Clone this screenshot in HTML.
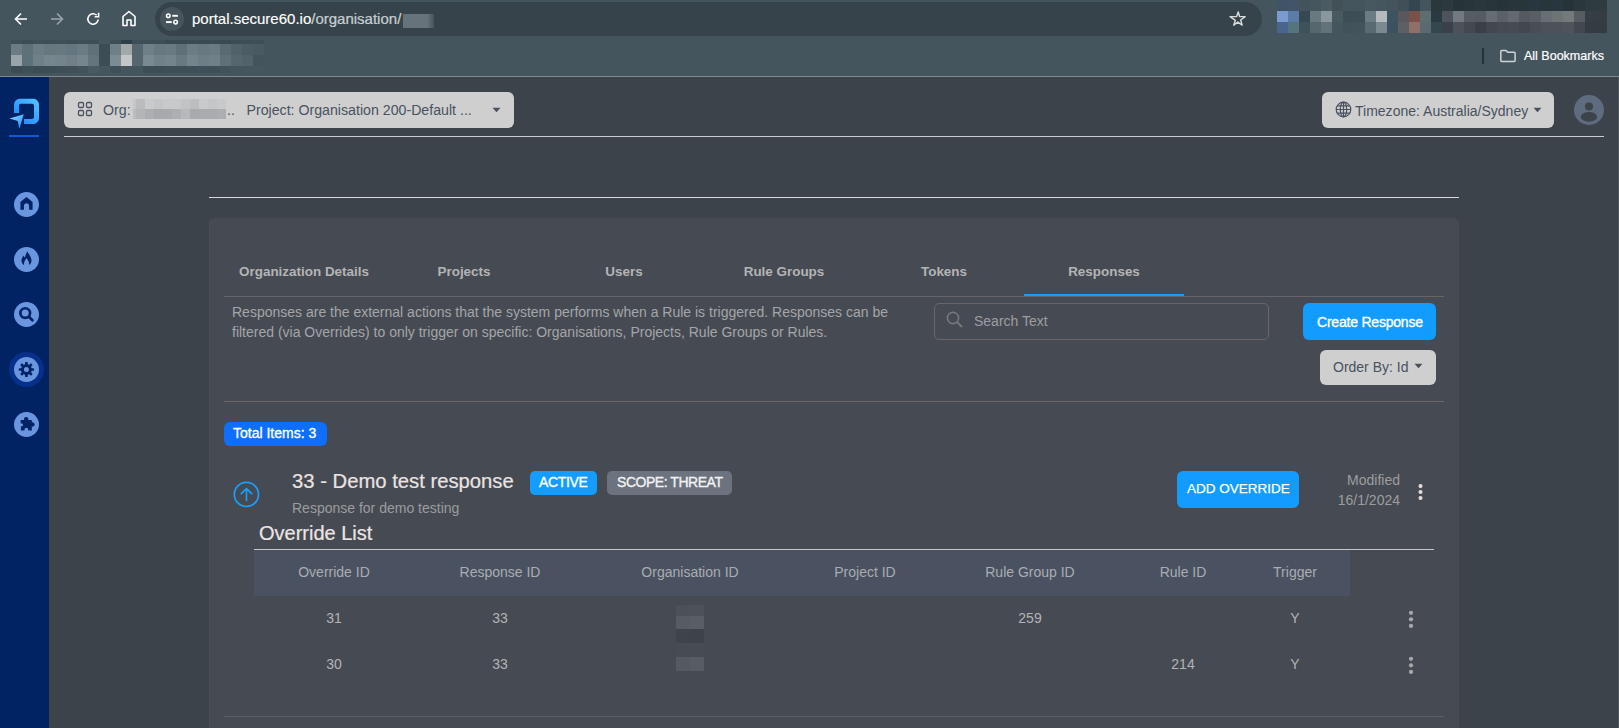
<!DOCTYPE html>
<html><head><meta charset="utf-8">
<style>
*{box-sizing:border-box;margin:0;padding:0}
html,body{width:1619px;height:728px;overflow:hidden;background:#3d434b;font-family:"Liberation Sans",sans-serif}
.abs{position:absolute}
.txt{position:absolute;white-space:nowrap;line-height:1}
#chrome{position:absolute;left:0;top:0;width:1619px;height:77px;background:#45555e;border-bottom:1px solid #7d8a90}
#pill{position:absolute;left:155px;top:2px;width:1107px;height:34px;border-radius:17px;background:#36434a}
#side{position:absolute;left:0;top:77px;width:49px;height:651px;background:#012364}
.hline{position:absolute;height:1px}
.btn-grey{position:absolute;background:#cfcfcf;border-radius:6px}
#card{position:absolute;left:209px;top:218px;width:1250px;height:540px;background:#464b53;border-radius:5px;border-left:1px solid #4b4d56}
.tab{position:absolute;top:264.6px;width:160px;text-align:center;font-weight:bold;font-size:13.45px;line-height:1;color:#b4b4b6}
.sico{position:absolute;left:14px;width:25px;height:25px;border-radius:50%;background:#6a96e0}
.sico svg{position:absolute;left:0;top:0}
.th{position:absolute;top:565px;font-size:14px;color:#a9acb2;text-align:center;line-height:1;white-space:nowrap}
.td{position:absolute;font-size:14px;color:#b3b3b5;text-align:center;line-height:1;white-space:nowrap}
.mos{position:absolute}
.mos i{position:absolute;display:block}
</style></head><body>
<div id="chrome">
  <div id="pill"></div>
  <!-- back -->
  <svg class="abs" style="left:13px;top:11px" width="16" height="16" viewBox="0 0 16 16"><path d="M14 8H2.5M8 2.5L2.5 8L8 13.5" stroke="#fff" stroke-width="1.6" fill="none"/></svg>
  <svg class="abs" style="left:49px;top:11px" width="16" height="16" viewBox="0 0 16 16"><path d="M2 8h11.5M8 2.5L13.5 8L8 13.5" stroke="#9aa5aa" stroke-width="1.6" fill="none"/></svg>
  <svg class="abs" style="left:85px;top:11px" width="16" height="16" viewBox="0 0 16 16"><path d="M13.2 8.5A5.2 5.2 0 1 1 11.6 4.2" stroke="#fff" stroke-width="1.6" fill="none"/><path d="M13.6 1.8V5.8H9.6" stroke="#fff" stroke-width="1.6" fill="none"/></svg>
  <svg class="abs" style="left:121px;top:10px" width="16" height="17" viewBox="0 0 16 17"><path d="M2 15.5V6.5L8 1.5L14 6.5V15.5H10V10H6V15.5Z" stroke="#fff" stroke-width="1.6" fill="none" stroke-linejoin="round"/></svg>
  <div class="abs" style="left:160px;top:7px;width:24px;height:24px;border-radius:50%;background:#46545c"></div>
  <svg class="abs" style="left:164px;top:11px" width="16" height="16" viewBox="0 0 16 16"><circle cx="4.3" cy="4.8" r="1.8" stroke="#fff" stroke-width="1.5" fill="none"/><path d="M8.3 4.8H13.9" stroke="#fff" stroke-width="1.9"/><circle cx="11.6" cy="11.1" r="1.8" stroke="#fff" stroke-width="1.5" fill="none"/><path d="M2 11.1H7.8" stroke="#fff" stroke-width="1.9"/></svg>
  <div class="txt" style="left:192px;top:11px;font-size:15px;color:#fff;-webkit-text-stroke:0.15px #fff">portal.secure60.io<span style="color:#bfc6ca">/organisation/</span></div>
  <div class="abs" style="left:403px;top:14px;width:31px;height:14px;background:linear-gradient(90deg,#67737a 0,#67737a 78%,#46545b 100%)"></div>
  <svg class="abs" style="left:1228px;top:9px" width="20" height="20" viewBox="0 0 20 20"><path d="M10.30 2.15L11.85 7.30L18.00 7.30L12.98 11.06L14.70 16.80L9.86 13.39L5.30 16.80L7.12 11.47L1.20 7.30L8.54 7.30Z" stroke="#d9dadb" stroke-width="1.6" fill="none" stroke-linejoin="round" transform="translate(9.6 10.3) scale(0.9) translate(-9.6 -10.3)"/></svg>
  <!-- extensions mosaic -->
  <div class="mos" style="left:1277px;top:0;width:330px;height:38px"><i style="left:0px;top:0px;width:11px;height:11px;background:#405468"></i><i style="left:11px;top:0px;width:11px;height:11px;background:#415468"></i><i style="left:22px;top:0px;width:11px;height:11px;background:#44545a"></i><i style="left:33px;top:0px;width:11px;height:11px;background:#45565e"></i><i style="left:44px;top:0px;width:11px;height:11px;background:#4a5c62"></i><i style="left:55px;top:0px;width:11px;height:11px;background:#425058"></i><i style="left:66px;top:0px;width:11px;height:11px;background:#45555d"></i><i style="left:77px;top:0px;width:11px;height:11px;background:#45555d"></i><i style="left:88px;top:0px;width:11px;height:11px;background:#485860"></i><i style="left:99px;top:0px;width:11px;height:11px;background:#46565e"></i><i style="left:110px;top:0px;width:11px;height:11px;background:#44545c"></i><i style="left:121px;top:0px;width:11px;height:11px;background:#415058"></i><i style="left:132px;top:0px;width:11px;height:11px;background:#364650"></i><i style="left:143px;top:0px;width:11px;height:11px;background:#45555d"></i><i style="left:154px;top:0px;width:11px;height:11px;background:#2a383e"></i><i style="left:165px;top:0px;width:11px;height:11px;background:#2c3a40"></i><i style="left:176px;top:0px;width:11px;height:11px;background:#26343a"></i><i style="left:187px;top:0px;width:11px;height:11px;background:#28363c"></i><i style="left:198px;top:0px;width:11px;height:11px;background:#2a383e"></i><i style="left:209px;top:0px;width:11px;height:11px;background:#28363c"></i><i style="left:220px;top:0px;width:11px;height:11px;background:#26343a"></i><i style="left:231px;top:0px;width:11px;height:11px;background:#28363c"></i><i style="left:242px;top:0px;width:11px;height:11px;background:#28363c"></i><i style="left:253px;top:0px;width:11px;height:11px;background:#283640"></i><i style="left:264px;top:0px;width:11px;height:11px;background:#28363c"></i><i style="left:275px;top:0px;width:11px;height:11px;background:#283640"></i><i style="left:286px;top:0px;width:11px;height:11px;background:#26343a"></i><i style="left:297px;top:0px;width:11px;height:11px;background:#2a383e"></i><i style="left:308px;top:0px;width:11px;height:11px;background:#2e3c42"></i><i style="left:319px;top:0px;width:11px;height:11px;background:#2e3c42"></i><i style="left:0px;top:11px;width:11px;height:11px;background:#7b9ad0"></i><i style="left:11px;top:11px;width:11px;height:11px;background:#5a7ca8"></i><i style="left:22px;top:11px;width:11px;height:11px;background:#364850"></i><i style="left:33px;top:11px;width:11px;height:11px;background:#687a80"></i><i style="left:44px;top:11px;width:11px;height:11px;background:#8a989e"></i><i style="left:55px;top:11px;width:11px;height:11px;background:#485a60"></i><i style="left:66px;top:11px;width:11px;height:11px;background:#3d4d55"></i><i style="left:77px;top:11px;width:11px;height:11px;background:#3e4e56"></i><i style="left:88px;top:11px;width:11px;height:11px;background:#6c7c84"></i><i style="left:99px;top:11px;width:11px;height:11px;background:#b4babd"></i><i style="left:110px;top:11px;width:11px;height:11px;background:#3c5460"></i><i style="left:121px;top:11px;width:11px;height:11px;background:#5a585c"></i><i style="left:132px;top:11px;width:11px;height:11px;background:#7a5048"></i><i style="left:143px;top:11px;width:11px;height:11px;background:#5e6e70"></i><i style="left:154px;top:11px;width:11px;height:11px;background:#2a3a42"></i><i style="left:165px;top:11px;width:11px;height:11px;background:#4e545a"></i><i style="left:176px;top:11px;width:11px;height:11px;background:#727a80"></i><i style="left:187px;top:11px;width:11px;height:11px;background:#555c62"></i><i style="left:198px;top:11px;width:11px;height:11px;background:#545b62"></i><i style="left:209px;top:11px;width:11px;height:11px;background:#656c72"></i><i style="left:220px;top:11px;width:11px;height:11px;background:#5a6268"></i><i style="left:231px;top:11px;width:11px;height:11px;background:#626a70"></i><i style="left:242px;top:11px;width:11px;height:11px;background:#545a60"></i><i style="left:253px;top:11px;width:11px;height:11px;background:#585e64"></i><i style="left:264px;top:11px;width:11px;height:11px;background:#676e74"></i><i style="left:275px;top:11px;width:11px;height:11px;background:#6c7476"></i><i style="left:286px;top:11px;width:11px;height:11px;background:#727a7c"></i><i style="left:297px;top:11px;width:11px;height:11px;background:#565c62"></i><i style="left:308px;top:11px;width:11px;height:11px;background:#363e44"></i><i style="left:319px;top:11px;width:11px;height:11px;background:#363c44"></i><i style="left:0px;top:22px;width:11px;height:11px;background:#4a6490"></i><i style="left:11px;top:22px;width:11px;height:11px;background:#557480"></i><i style="left:22px;top:22px;width:11px;height:11px;background:#3e525c"></i><i style="left:33px;top:22px;width:11px;height:11px;background:#56686e"></i><i style="left:44px;top:22px;width:11px;height:11px;background:#627278"></i><i style="left:55px;top:22px;width:11px;height:11px;background:#46565e"></i><i style="left:66px;top:22px;width:11px;height:11px;background:#42525a"></i><i style="left:77px;top:22px;width:11px;height:11px;background:#43535b"></i><i style="left:88px;top:22px;width:11px;height:11px;background:#5a6a72"></i><i style="left:99px;top:22px;width:11px;height:11px;background:#7a8a90"></i><i style="left:110px;top:22px;width:11px;height:11px;background:#3c5260"></i><i style="left:121px;top:22px;width:11px;height:11px;background:#5e5f62"></i><i style="left:132px;top:22px;width:11px;height:11px;background:#8e7068"></i><i style="left:143px;top:22px;width:11px;height:11px;background:#5a6a70"></i><i style="left:154px;top:22px;width:11px;height:11px;background:#34464e"></i><i style="left:165px;top:22px;width:11px;height:11px;background:#3a4248"></i><i style="left:176px;top:22px;width:11px;height:11px;background:#4c5258"></i><i style="left:187px;top:22px;width:11px;height:11px;background:#424a50"></i><i style="left:198px;top:22px;width:11px;height:11px;background:#3a4046"></i><i style="left:209px;top:22px;width:11px;height:11px;background:#42484e"></i><i style="left:220px;top:22px;width:11px;height:11px;background:#444c52"></i><i style="left:231px;top:22px;width:11px;height:11px;background:#464c52"></i><i style="left:242px;top:22px;width:11px;height:11px;background:#42484e"></i><i style="left:253px;top:22px;width:11px;height:11px;background:#484e54"></i><i style="left:264px;top:22px;width:11px;height:11px;background:#4c525a"></i><i style="left:275px;top:22px;width:11px;height:11px;background:#4c525a"></i><i style="left:286px;top:22px;width:11px;height:11px;background:#4e545a"></i><i style="left:297px;top:22px;width:11px;height:11px;background:#42484e"></i><i style="left:308px;top:22px;width:11px;height:11px;background:#343c42"></i><i style="left:319px;top:22px;width:11px;height:11px;background:#343c42"></i></div>
  <!-- bookmarks mosaic -->
  <div class="mos" style="left:11px;top:40px;width:270px;height:33px"><i style="left:0px;top:0px;width:11px;height:4px;background:#3f4f57"></i><i style="left:11px;top:0px;width:11px;height:4px;background:#3d4d55"></i><i style="left:22px;top:0px;width:11px;height:4px;background:#3f4f57"></i><i style="left:33px;top:0px;width:11px;height:4px;background:#3e4e56"></i><i style="left:44px;top:0px;width:11px;height:4px;background:#3f4f57"></i><i style="left:55px;top:0px;width:11px;height:4px;background:#3e4e56"></i><i style="left:66px;top:0px;width:11px;height:4px;background:#3f4f57"></i><i style="left:77px;top:0px;width:11px;height:4px;background:#3e4e56"></i><i style="left:88px;top:0px;width:11px;height:4px;background:#46565e"></i><i style="left:99px;top:0px;width:11px;height:4px;background:#3e4e56"></i><i style="left:110px;top:0px;width:11px;height:4px;background:#2f3f48"></i><i style="left:121px;top:0px;width:11px;height:4px;background:#3e4e56"></i><i style="left:132px;top:0px;width:11px;height:4px;background:#3e4e56"></i><i style="left:143px;top:0px;width:11px;height:4px;background:#3e4e56"></i><i style="left:154px;top:0px;width:11px;height:4px;background:#3a4a52"></i><i style="left:165px;top:0px;width:11px;height:4px;background:#3a4a52"></i><i style="left:176px;top:0px;width:11px;height:4px;background:#3b4b53"></i><i style="left:187px;top:0px;width:11px;height:4px;background:#3a4a52"></i><i style="left:198px;top:0px;width:11px;height:4px;background:#3b4b53"></i><i style="left:209px;top:0px;width:11px;height:4px;background:#3a4a52"></i><i style="left:220px;top:0px;width:11px;height:4px;background:#3d4d55"></i><i style="left:231px;top:0px;width:11px;height:4px;background:#3e4e56"></i><i style="left:242px;top:0px;width:11px;height:4px;background:#3f4f57"></i><i style="left:0px;top:4px;width:11px;height:11px;background:#6b7c84"></i><i style="left:11px;top:4px;width:11px;height:11px;background:#5e7078"></i><i style="left:22px;top:4px;width:11px;height:11px;background:#6b7c84"></i><i style="left:33px;top:4px;width:11px;height:11px;background:#66777e"></i><i style="left:44px;top:4px;width:11px;height:11px;background:#68797f"></i><i style="left:55px;top:4px;width:11px;height:11px;background:#647680"></i><i style="left:66px;top:4px;width:11px;height:11px;background:#6b7c84"></i><i style="left:77px;top:4px;width:11px;height:11px;background:#5f7078"></i><i style="left:88px;top:4px;width:11px;height:11px;background:#3d4d55"></i><i style="left:99px;top:4px;width:11px;height:11px;background:#6f8088"></i><i style="left:110px;top:4px;width:11px;height:11px;background:#a3a8a8"></i><i style="left:121px;top:4px;width:11px;height:11px;background:#55666e"></i><i style="left:132px;top:4px;width:11px;height:11px;background:#6f8088"></i><i style="left:143px;top:4px;width:11px;height:11px;background:#67787f"></i><i style="left:154px;top:4px;width:11px;height:11px;background:#6a7a82"></i><i style="left:165px;top:4px;width:11px;height:11px;background:#5f7078"></i><i style="left:176px;top:4px;width:11px;height:11px;background:#6b7c84"></i><i style="left:187px;top:4px;width:11px;height:11px;background:#67787f"></i><i style="left:198px;top:4px;width:11px;height:11px;background:#6a7b82"></i><i style="left:209px;top:4px;width:11px;height:11px;background:#5a6a72"></i><i style="left:220px;top:4px;width:11px;height:11px;background:#52626a"></i><i style="left:231px;top:4px;width:11px;height:11px;background:#4c5c64"></i><i style="left:242px;top:4px;width:11px;height:11px;background:#4a5a62"></i><i style="left:0px;top:15px;width:11px;height:11px;background:#98a4aa"></i><i style="left:11px;top:15px;width:11px;height:11px;background:#5e7078"></i><i style="left:22px;top:15px;width:11px;height:11px;background:#6f8088"></i><i style="left:33px;top:15px;width:11px;height:11px;background:#76868e"></i><i style="left:44px;top:15px;width:11px;height:11px;background:#74848c"></i><i style="left:55px;top:15px;width:11px;height:11px;background:#707f88"></i><i style="left:66px;top:15px;width:11px;height:11px;background:#76868e"></i><i style="left:77px;top:15px;width:11px;height:11px;background:#64757e"></i><i style="left:88px;top:15px;width:11px;height:11px;background:#3d4d55"></i><i style="left:99px;top:15px;width:11px;height:11px;background:#7b8c94"></i><i style="left:110px;top:15px;width:11px;height:11px;background:#c4c7c8"></i><i style="left:121px;top:15px;width:11px;height:11px;background:#55666e"></i><i style="left:132px;top:15px;width:11px;height:11px;background:#7a8a92"></i><i style="left:143px;top:15px;width:11px;height:11px;background:#718188"></i><i style="left:154px;top:15px;width:11px;height:11px;background:#74848c"></i><i style="left:165px;top:15px;width:11px;height:11px;background:#687980"></i><i style="left:176px;top:15px;width:11px;height:11px;background:#74848c"></i><i style="left:187px;top:15px;width:11px;height:11px;background:#6d7e86"></i><i style="left:198px;top:15px;width:11px;height:11px;background:#6f8088"></i><i style="left:209px;top:15px;width:11px;height:11px;background:#5f7078"></i><i style="left:220px;top:15px;width:11px;height:11px;background:#56666e"></i><i style="left:231px;top:15px;width:11px;height:11px;background:#52626a"></i><i style="left:242px;top:15px;width:11px;height:11px;background:#44545c"></i><i style="left:0px;top:26px;width:11px;height:7px;background:#3c4c54"></i><i style="left:11px;top:26px;width:11px;height:7px;background:#3d4f58"></i><i style="left:22px;top:26px;width:11px;height:7px;background:#3c4c55"></i><i style="left:33px;top:26px;width:11px;height:7px;background:#3d4d55"></i><i style="left:44px;top:26px;width:11px;height:7px;background:#3f4f57"></i><i style="left:55px;top:26px;width:11px;height:7px;background:#414f57"></i><i style="left:66px;top:26px;width:11px;height:7px;background:#43535b"></i><i style="left:77px;top:26px;width:11px;height:7px;background:#4a5a62"></i><i style="left:88px;top:26px;width:11px;height:7px;background:#46565e"></i><i style="left:99px;top:26px;width:11px;height:7px;background:#40505a"></i><i style="left:110px;top:26px;width:11px;height:7px;background:#45555d"></i><i style="left:121px;top:26px;width:11px;height:7px;background:#45555d"></i><i style="left:132px;top:26px;width:11px;height:7px;background:#3e4e56"></i><i style="left:143px;top:26px;width:11px;height:7px;background:#3e4e56"></i><i style="left:154px;top:26px;width:11px;height:7px;background:#3f4f57"></i><i style="left:165px;top:26px;width:11px;height:7px;background:#404f57"></i><i style="left:176px;top:26px;width:11px;height:7px;background:#3f4f57"></i><i style="left:187px;top:26px;width:11px;height:7px;background:#40505a"></i><i style="left:198px;top:26px;width:11px;height:7px;background:#3f4f57"></i><i style="left:209px;top:26px;width:11px;height:7px;background:#43535b"></i><i style="left:220px;top:26px;width:11px;height:7px;background:#45555d"></i><i style="left:231px;top:26px;width:11px;height:7px;background:#46565e"></i><i style="left:242px;top:26px;width:11px;height:7px;background:#47575f"></i></div>
  <div class="abs" style="left:1482px;top:48px;width:2px;height:16px;background:#263238"></div>
  <svg class="abs" style="left:1499px;top:48px" width="18" height="16" viewBox="0 0 18 16"><path d="M1.8 3.4C1.8 2.9 2.2 2.5 2.7 2.5H7L8.7 4.3H15.2C15.7 4.3 16.1 4.7 16.1 5.2V12.6C16.1 13.1 15.7 13.5 15.2 13.5H2.7C2.2 13.5 1.8 13.1 1.8 12.6Z" stroke="#d0d4d6" stroke-width="1.5" fill="none" stroke-linejoin="round"/></svg>
  <div class="txt" style="left:1524px;top:49.5px;font-size:12.5px;color:#fff;-webkit-text-stroke:0.2px #fff">All Bookmarks</div>
</div>

<div id="side">
  <svg class="abs" style="left:8px;top:20px" width="34" height="34" viewBox="0 0 34 34">
    <defs><linearGradient id="lg" x1="0" y1="1" x2="1" y2="0"><stop offset="0" stop-color="#1a7dff"/><stop offset="1" stop-color="#55c8ff"/></linearGradient>
    <linearGradient id="lg2" x1="0" y1="0" x2="1" y2="1"><stop offset="0" stop-color="#8ee0ff"/><stop offset="1" stop-color="#1a8cff"/></linearGradient></defs>
    <path d="M12 1.8H25C28.3 1.8 31 4.5 31 7.8V21C31 24.3 28.3 27 25 27H16V22H24C25.1 22 26 21.1 26 20V8.8C26 7.7 25.1 6.8 24 6.8H13C11.9 6.8 11 7.7 11 8.8V16H6V7.8C6 4.5 8.7 1.8 12 1.8Z" fill="url(#lg)"/>
    <path d="M1.5 21.4L15.7 17.3L11.4 31.8L9.8 24.1Z" fill="url(#lg2)"/>
  </svg>
  <div class="abs" style="left:9px;top:58px;width:30px;height:2px;background:#0f5ad0"></div>
  <div class="sico" style="top:115px"><svg width="25" height="25" viewBox="0 0 25 25"><path d="M12.5 5L18.6 10.1V17.8H15.1V13.7C15.1 12.3 13.9 11.2 12.5 11.2S9.95 12.3 9.95 13.7V17.8H6.4V10.1Z" fill="#022466"/></svg></div>
  <div class="sico" style="top:170px"><svg width="25" height="25" viewBox="0 0 25 25"><path d="M13.4 4.2C14.3 7 17.6 9.6 17.5 13.7C17.4 15.8 16.2 17.3 14.9 18.1C15.3 16.3 14.9 14.6 13.8 13.1C13.2 12.3 12.7 11.7 12.4 11.1C11.9 12.5 10.7 13.6 10.3 15C10 16.1 10 17.2 10.1 18.2C8.5 17.2 7.4 15.4 7.5 13.2C7.6 11.2 8.8 9.9 9.6 8.6C9.9 9.6 10.3 10.3 10.9 10.6C11.4 8.3 12.2 6 13.4 4.2Z" fill="#022466"/></svg></div>
  <div class="sico" style="top:225px"><svg width="25" height="25" viewBox="0 0 25 25"><circle cx="11.2" cy="11.1" r="4.85" stroke="#022466" stroke-width="2.7" fill="none"/><path d="M15.2 15.1L18.4 18.2" stroke="#022466" stroke-width="2.8" stroke-linecap="round"/></svg></div>
  <div class="abs" style="left:9.2px;top:275.2px;width:34.6px;height:34.6px;border-radius:50%;background:#06308a"></div><div class="sico" style="top:280px"><svg width="25" height="25" viewBox="0 0 25 25"><g fill="#022466"><rect x="11.05" y="4.9" width="2.7" height="3.4" rx="0.6" transform="rotate(0 12.4 12.5)"/><rect x="11.05" y="4.9" width="2.7" height="3.4" rx="0.6" transform="rotate(45 12.4 12.5)"/><rect x="11.05" y="4.9" width="2.7" height="3.4" rx="0.6" transform="rotate(90 12.4 12.5)"/><rect x="11.05" y="4.9" width="2.7" height="3.4" rx="0.6" transform="rotate(135 12.4 12.5)"/><rect x="11.05" y="4.9" width="2.7" height="3.4" rx="0.6" transform="rotate(180 12.4 12.5)"/><rect x="11.05" y="4.9" width="2.7" height="3.4" rx="0.6" transform="rotate(225 12.4 12.5)"/><rect x="11.05" y="4.9" width="2.7" height="3.4" rx="0.6" transform="rotate(270 12.4 12.5)"/><rect x="11.05" y="4.9" width="2.7" height="3.4" rx="0.6" transform="rotate(315 12.4 12.5)"/></g><circle cx="12.4" cy="12.5" r="3.95" stroke="#022466" stroke-width="2.9" fill="none"/></svg></div>
  <div class="sico" style="top:335px"><svg width="25" height="25" viewBox="0 0 25 25"><path d="M6.7 7.9H10.3C10 7.5 9.9 7.1 10 6.7C10.2 5.7 11.1 5 12.2 5C13.3 5 14.2 5.7 14.4 6.7C14.5 7.1 14.4 7.5 14.1 7.9H17.8V10.6C18.2 10.3 18.6 10.3 19 10.4C20 10.6 20.7 11.5 20.7 12.5C20.7 13.5 20 14.4 19 14.6C18.6 14.7 18.2 14.7 17.8 14.4V18.6H14.1C14.3 18.3 14.4 17.9 14.3 17.5C14.1 16.5 13.3 15.7 12.4 15.7C11.5 15.7 10.7 16.5 10.5 17.5C10.4 17.9 10.5 18.3 10.7 18.6H6.9V14.2C7.3 14.4 7.7 14.4 8.1 14.3C8.7 14 9 13.5 9 12.9C9 12.3 8.7 11.8 8.1 11.5C7.7 11.4 7.3 11.4 6.7 11.6Z" fill="#022466"/></svg></div>
</div>

<!-- header -->
<div class="btn-grey" style="left:64px;top:92px;width:450px;height:36px"></div>
<svg class="abs" style="left:77px;top:101px" width="16" height="16" viewBox="0 0 16 16"><g stroke="#4a5260" stroke-width="1.3" fill="none"><rect x="1.5" y="1.5" width="5" height="5" rx="1.2"/><rect x="9.5" y="1.5" width="5" height="5" rx="1.2"/><rect x="1.5" y="9.5" width="5" height="5" rx="1.2"/><rect x="9.5" y="9.5" width="5" height="5" rx="1.2"/></g></svg>
<div class="txt" style="left:103px;top:103.2px;font-size:14.2px;color:#4a5260">Org:</div>
<div class="mos" style="left:133px;top:99px;width:94px;height:20px"><i style="left:0px;top:0px;width:3px;height:10px;background:#c6c7c9"></i><i style="left:3px;top:0px;width:9px;height:10px;background:#bbbcbf"></i><i style="left:12px;top:0px;width:9px;height:10px;background:#c9cacc"></i><i style="left:21px;top:0px;width:9px;height:10px;background:#c4c5c8"></i><i style="left:30px;top:0px;width:9px;height:10px;background:#c8c9cb"></i><i style="left:39px;top:0px;width:9px;height:10px;background:#c8c9cb"></i><i style="left:48px;top:0px;width:9px;height:10px;background:#c2c3c5"></i><i style="left:57px;top:0px;width:9px;height:10px;background:#bdbec0"></i><i style="left:66px;top:0px;width:9px;height:10px;background:#c9cacc"></i><i style="left:75px;top:0px;width:9px;height:10px;background:#c5c6c8"></i><i style="left:84px;top:0px;width:9px;height:10px;background:#c8c9cb"></i><i style="left:0px;top:10px;width:3px;height:10px;background:#bbbcbe"></i><i style="left:3px;top:10px;width:9px;height:10px;background:#b4b5b8"></i><i style="left:12px;top:10px;width:9px;height:10px;background:#adaeb1"></i><i style="left:21px;top:10px;width:9px;height:10px;background:#a8a9ac"></i><i style="left:30px;top:10px;width:9px;height:10px;background:#a9aaad"></i><i style="left:39px;top:10px;width:9px;height:10px;background:#aeafb2"></i><i style="left:48px;top:10px;width:9px;height:10px;background:#b7b8bb"></i><i style="left:57px;top:10px;width:9px;height:10px;background:#a9aaad"></i><i style="left:66px;top:10px;width:9px;height:10px;background:#a9acaf"></i><i style="left:75px;top:10px;width:9px;height:10px;background:#aaabae"></i><i style="left:84px;top:10px;width:9px;height:10px;background:#adaeb1"></i></div>
<div class="txt" style="left:227px;top:103.2px;font-size:14.2px;color:#4a5260">..</div>
<div class="txt" style="left:246.5px;top:103.2px;font-size:14.18px;color:#4a5260">Project: Organisation 200-Default ...</div>
<svg class="abs" style="left:492px;top:107px" width="9" height="6" viewBox="0 0 9 6"><path d="M0.5 0.8H8.5L4.5 5.2Z" fill="#4a5260"/></svg>
<div class="hline" style="left:64px;top:136px;width:1540px;background:#c9ccd0"></div>
<div class="btn-grey" style="left:1322px;top:92px;width:232px;height:36px"></div>
<svg class="abs" style="left:1335px;top:101px" width="17" height="17" viewBox="0 0 17 17"><g stroke="#4a5260" stroke-width="1.2" fill="none"><circle cx="8.5" cy="8.5" r="7.3"/><ellipse cx="8.5" cy="8.5" rx="3.2" ry="7.3"/><path d="M1.2 8.5H15.8M2.3 4.8H14.7M2.3 12.2H14.7M8.5 1.2V15.8"/></g></svg>
<div class="txt" style="left:1355px;top:103.6px;font-size:14.03px;color:#4a5260">Timezone: Australia/Sydney</div>
<svg class="abs" style="left:1533px;top:107px" width="9" height="6" viewBox="0 0 9 6"><path d="M0.5 0.8H8.5L4.5 5.2Z" fill="#4a5260"/></svg>
<svg class="abs" style="left:1574px;top:95px" width="30" height="30" viewBox="0 0 30 30"><circle cx="15" cy="15" r="15" fill="#5f6b7f"/><circle cx="15" cy="11.4" r="4" fill="#3d434b"/><ellipse cx="15" cy="21.9" rx="8.2" ry="4.9" fill="#3d434b"/></svg>

<div class="hline" style="left:209px;top:197px;width:1250px;background:#d5d9dd"></div>
<div id="card"></div>

<div class="tab" style="left:224px">Organization Details</div>
<div class="tab" style="left:384px">Projects</div>
<div class="tab" style="left:544px">Users</div>
<div class="tab" style="left:704px">Rule Groups</div>
<div class="tab" style="left:864px">Tokens</div>
<div class="tab" style="left:1024px">Responses</div>
<div class="hline" style="left:224px;top:296px;width:1220px;background:#63656a"></div>
<div class="abs" style="left:1024px;top:294px;width:160px;height:2px;background:#1a9cf5"></div>

<div class="txt" style="left:232px;top:302px;font-size:14px;line-height:20px;color:#a4a5a8;white-space:normal;width:680px">Responses are the external actions that the system performs when a Rule is triggered. Responses can be<br>filtered (via Overrides) to only trigger on specific: Organisations, Projects, Rule Groups or Rules.</div>

<div class="abs" style="left:934px;top:303px;width:335px;height:37px;border:1px solid #6a6668;border-radius:5px"></div>
<svg class="abs" style="left:945px;top:310px" width="20" height="20" viewBox="0 0 20 20"><circle cx="8" cy="8" r="5.6" stroke="#77777a" stroke-width="1.6" fill="none"/><path d="M12.2 12.2L17 17" stroke="#77777a" stroke-width="1.8"/></svg>
<div class="txt" style="left:974px;top:314px;font-size:14px;color:#9d9da0">Search Text</div>

<div class="abs" style="left:1303px;top:303px;width:133px;height:37px;border-radius:6px;background:#129cff"></div>
<div class="txt" style="left:1317px;top:314.5px;font-size:14px;letter-spacing:-0.21px;color:#fff;-webkit-text-stroke:0.35px #fff">Create Response</div>
<div class="btn-grey" style="left:1320px;top:350px;width:116px;height:35px"></div>
<div class="txt" style="left:1333px;top:360px;font-size:14px;color:#4a5260">Order By: Id</div>
<svg class="abs" style="left:1414px;top:363px" width="9" height="6" viewBox="0 0 9 6"><path d="M0.5 0.8H8.5L4.5 5.2Z" fill="#4a5260"/></svg>

<div class="hline" style="left:224px;top:401px;width:1220px;background:#6a6769"></div>

<div class="abs" style="left:224px;top:422px;width:103px;height:24px;border-radius:6px;background:#0e6efd"></div>
<div class="txt" style="left:233px;top:426.3px;font-size:14px;color:#fff;-webkit-text-stroke:0.35px #fff">Total Items: 3</div>

<svg class="abs" style="left:233px;top:481px" width="27" height="27" viewBox="0 0 27 27"><circle cx="13.4" cy="13.4" r="12.1" stroke="#18a0ff" stroke-width="1.7" fill="none"/><path d="M13.5 19.6V8M8.3 12.6L13.5 7.6L18.7 12.6" stroke="#18a0ff" stroke-width="1.6" fill="none" stroke-linecap="round" stroke-linejoin="round"/></svg>
<div class="txt" style="left:292px;top:470.5px;font-size:20.25px;color:#ebe3e1;-webkit-text-stroke:0.2px #ebe3e1">33 - Demo test response</div>
<div class="abs" style="left:530px;top:471px;width:67px;height:24px;border-radius:5px;background:#149dff"></div>
<div class="txt" style="left:539px;top:475.2px;font-size:14px;letter-spacing:-0.35px;color:#fff;-webkit-text-stroke:0.35px #fff">ACTIVE</div>
<div class="abs" style="left:607px;top:471px;width:125px;height:24px;border-radius:5px;background:#6c737e"></div>
<div class="txt" style="left:617px;top:475.2px;font-size:14px;letter-spacing:-0.46px;color:#f2f2f2;-webkit-text-stroke:0.35px #f2f2f2">SCOPE: THREAT</div>
<div class="txt" style="left:292px;top:501.3px;font-size:14px;color:#9c9c9e">Response for demo testing</div>

<div class="abs" style="left:1177px;top:471px;width:122px;height:37px;border-radius:6px;background:#129cff"></div>
<div class="txt" style="left:1187px;top:482px;font-size:13.5px;color:#fff;-webkit-text-stroke:0.25px #fff">ADD OVERRIDE</div>
<div class="txt" style="left:1300px;top:473.2px;width:100px;text-align:right;font-size:14px;color:#9d9d9f">Modified</div>
<div class="txt" style="left:1300px;top:493.2px;width:100px;text-align:right;font-size:14px;color:#9d9d9f">16/1/2024</div>
<svg class="abs" style="left:1416.4px;top:482px" width="9" height="20" viewBox="0 0 9 20"><g fill="#e4dcdb"><circle cx="4.5" cy="4.1" r="2.05"/><circle cx="4.5" cy="10" r="2.05"/><circle cx="4.5" cy="16" r="2.05"/></g></svg>

<div class="txt" style="left:259px;top:523.4px;font-size:20px;color:#ede5e3;-webkit-text-stroke:0.2px #ede5e3">Override List</div>
<div class="hline" style="left:254px;top:549px;width:1180px;background:#c5c6c8"></div>
<div class="abs" style="left:254px;top:550px;width:1096px;height:46px;background:#4a5261"></div>
<div class="th" style="left:254px;width:160px">Override ID</div>
<div class="th" style="left:414px;width:172px">Response ID</div>
<div class="th" style="left:586px;width:208px">Organisation ID</div>
<div class="th" style="left:794px;width:142px">Project ID</div>
<div class="th" style="left:936px;width:188px">Rule Group ID</div>
<div class="th" style="left:1124px;width:118px">Rule ID</div>
<div class="th" style="left:1242px;width:106px">Trigger</div>

<div class="td" style="left:254px;width:160px;top:611.2px">31</div>
<div class="td" style="left:414px;width:172px;top:611.2px">33</div>
<div class="td" style="left:936px;width:188px;top:611.2px">259</div>
<div class="td" style="left:1242px;width:106px;top:611.2px">Y</div>
<div class="td" style="left:254px;width:160px;top:656.5px">30</div>
<div class="td" style="left:414px;width:172px;top:656.5px">33</div>
<div class="td" style="left:1124px;width:118px;top:656.5px">214</div>
<div class="td" style="left:1242px;width:106px;top:656.5px">Y</div>
<div class="mos" style="left:676px;top:605px;width:28px;height:67px"><i style="left:0px;top:0px;width:14px;height:11px;background:#4c5058"></i><i style="left:14px;top:0px;width:14px;height:11px;background:#4d5159"></i><i style="left:0px;top:11px;width:14px;height:13px;background:#575b63"></i><i style="left:14px;top:11px;width:14px;height:13px;background:#595d65"></i><i style="left:0px;top:24px;width:14px;height:14px;background:#3f444c"></i><i style="left:14px;top:24px;width:14px;height:14px;background:#3e434b"></i><i style="left:0px;top:38px;width:14px;height:14px;background:#474c54"></i><i style="left:14px;top:38px;width:14px;height:14px;background:#474c54"></i><i style="left:0px;top:52px;width:14px;height:14px;background:#555960"></i><i style="left:14px;top:52px;width:14px;height:14px;background:#575b62"></i></div>
<svg class="abs" style="left:1406px;top:608px" width="9" height="20" viewBox="0 0 9 20"><g fill="#a8a8ac"><circle cx="5" cy="4.8" r="2.1"/><circle cx="5" cy="11.3" r="2.1"/><circle cx="5" cy="17.9" r="2.1"/></g></svg>
<svg class="abs" style="left:1406px;top:654px" width="9" height="20" viewBox="0 0 9 20"><g fill="#a8a8ac"><circle cx="5" cy="4.8" r="2.1"/><circle cx="5" cy="11.3" r="2.1"/><circle cx="5" cy="17.9" r="2.1"/></g></svg>

<div class="hline" style="left:224px;top:716px;width:1220px;background:#5c6169"></div>
<div class="abs" style="left:1618px;top:77px;width:1px;height:651px;background:#535961"></div>
</body></html>
